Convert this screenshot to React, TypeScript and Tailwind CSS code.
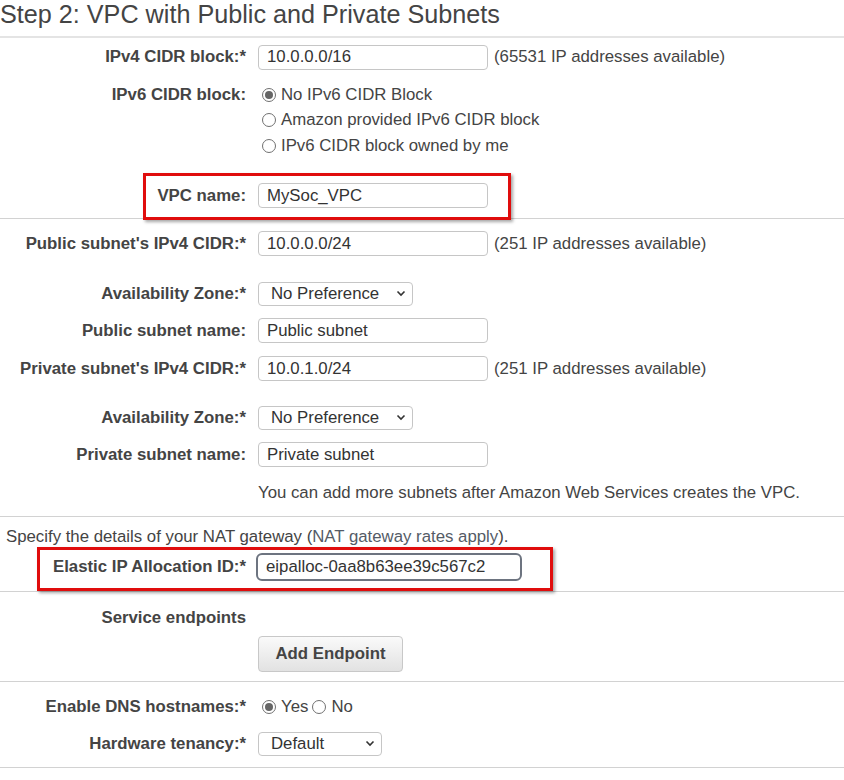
import React from "react";

const Radio = ({ checked }: { checked?: boolean }) => (
  <span className="flex h-[14px] w-[14px] shrink-0 items-center justify-center rounded-full border border-[#707070] bg-white">
    {checked && <span className="h-[8px] w-[8px] rounded-full bg-[#666]" />}
  </span>
);

const Chevron = () => (
  <svg width="10" height="7" viewBox="0 0 10 7" className="shrink-0">
    <polyline points="1.5,1.5 5,5 8.5,1.5" fill="none" stroke="#333" strokeWidth="1.6" />
  </svg>
);

const TextInput = ({ value }: { value: string }) => (
  <div className="flex h-[25px] w-[230px] items-center rounded-[4px] border border-[#c6c6c6] bg-white pl-[8px] text-[#333]">
    {value}
  </div>
);

const Select = ({ value, width }: { value: string; width: string }) => (
  <div className={`flex h-[24px] items-center justify-between rounded-[4px] border border-[#c6c6c6] bg-white pl-[12px] pr-[6px] text-[#333] ${width}`}>
    <span>{value}</span>
    <Chevron />
  </div>
);

const Row = ({
  label,
  children,
  className = "",
}: {
  label?: string;
  children?: React.ReactNode;
  className?: string;
}) => (
  <div className={`relative flex h-[26px] items-center gap-[12px] ${className}`}>
    <div className="w-[246px] shrink-0 whitespace-nowrap text-right font-bold text-[#444]">{label}</div>
    <div className="flex items-center whitespace-nowrap">{children}</div>
  </div>
);

const Available = ({ n }: { n: string }) => (
  <span className="ml-[6px] text-[#444]">({n} IP addresses available)</span>
);

export default function App() {
  return (
    <div className="min-h-[780px] w-[844px] overflow-hidden bg-white font-['Liberation_Sans',Arial,sans-serif] text-[16.8px] leading-[20px] text-[#444]">
      {/* title */}
      <div className="h-[38px] border-b-2 border-[#e4e4e4]">
        <h1 className="whitespace-nowrap pt-[1px] text-[25.2px] leading-[26px] text-[#444]">
          Step 2: VPC with Public and Private Subnets
        </h1>
      </div>

      {/* vpc */}
      <div className="border-b border-[#d2d2d2] pb-[9px]">
        <Row label="IPv4 CIDR block:*" className="mt-[6px]">
          <TextInput value="10.0.0.0/16" />
          <Available n="65531" />
        </Row>
        <div className="mt-[12px] flex gap-[12px]">
          <div className="flex h-[25.5px] w-[246px] shrink-0 items-center justify-end font-bold">IPv6 CIDR block:</div>
          <div className="flex flex-col">
            <label className="flex h-[25.5px] items-center gap-[5px] pl-[4px]">
              <Radio checked />
              No IPv6 CIDR Block
            </label>
            <label className="flex h-[25.5px] items-center gap-[5px] pl-[4px]">
              <Radio />
              Amazon provided IPv6 CIDR block
            </label>
            <label className="flex h-[25.5px] items-center gap-[5px] pl-[4px]">
              <Radio />
              IPv6 CIDR block owned by me
            </label>
          </div>
        </div>
        <Row label="VPC name:" className="mt-[24px]">
          <TextInput value="MySoc_VPC" />
          <div className="absolute left-[143px] top-[-10px] h-[47px] w-[368px] border-[3px] border-[#e00d0d] shadow-[2px_2px_3px_rgba(0,0,0,0.35)]" />
        </Row>
      </div>

      {/* subnets */}
      <div className="border-b border-[#d2d2d2] pb-[10px]">
        <Row label="Public subnet's IPv4 CIDR:*" className="mt-[12px]">
          <TextInput value="10.0.0.0/24" />
          <Available n="251" />
        </Row>
        <Row label="Availability Zone:*" className="mt-[24px]">
          <Select value="No Preference" width="w-[155px]" />
        </Row>
        <Row label="Public subnet name:" className="mt-[11px]">
          <TextInput value="Public subnet" />
        </Row>
        <Row label="Private subnet's IPv4 CIDR:*" className="mt-[12px]">
          <TextInput value="10.0.1.0/24" />
          <Available n="251" />
        </Row>
        <Row label="Availability Zone:*" className="mt-[23px]">
          <Select value="No Preference" width="w-[155px]" />
        </Row>
        <Row label="Private subnet name:" className="mt-[11px]">
          <TextInput value="Private subnet" />
        </Row>
        <Row className="mt-[12px]">
          <span>You can add more subnets after Amazon Web Services creates the VPC.</span>
        </Row>
      </div>

      {/* nat gateway */}
      <div className="border-b border-[#d2d2d2] pb-[10px]">
        <p className="mt-[10px] h-[20px] whitespace-nowrap pl-[6px]">
          Specify the details of your NAT gateway (<span className="text-[#545b66]">NAT gateway rates apply</span>).
        </p>
        <div className="relative mt-[6px] flex h-[28px] items-center gap-[10px]">
          <div className="w-[246px] shrink-0 text-right font-bold">Elastic IP Allocation ID:*</div>
          <div className="flex h-[28px] w-[266px] items-center rounded-[6px] border-2 border-[#6d7480] bg-white pl-[8px] text-[#333]">
            eipalloc-0aa8b63ee39c567c2
          </div>
          <div className="absolute left-[37px] top-[-6px] h-[44px] w-[516px] border-[3px] border-[#e00d0d] shadow-[2px_2px_3px_rgba(0,0,0,0.35)]" />
        </div>
      </div>

      {/* endpoints */}
      <div className="border-b border-[#d2d2d2] pb-[9px]">
        <Row label="Service endpoints" className="mt-[13px]" />
        <div className="mt-[5px] pl-[258px]">
          <button className="h-[36px] w-[145px] rounded-[4px] border border-[#c8c8c8] bg-linear-to-b from-[#fafafa] to-[#e2e2e2] font-bold text-[#444]">
            Add Endpoint
          </button>
        </div>
      </div>

      {/* dns + tenancy */}
      <div className="border-b border-[#d2d2d2] pb-[10px]">
        <Row label="Enable DNS hostnames:*" className="mt-[12px]">
          <label className="flex items-center gap-[5px] pl-[4px]">
            <Radio checked />
            Yes
          </label>
          <label className="ml-[4px] flex items-center gap-[5px]">
            <Radio />
            No
          </label>
        </Row>
        <Row label="Hardware tenancy:*" className="mt-[11px]">
          <Select value="Default" width="w-[124px]" />
        </Row>
      </div>
    </div>
  );
}
